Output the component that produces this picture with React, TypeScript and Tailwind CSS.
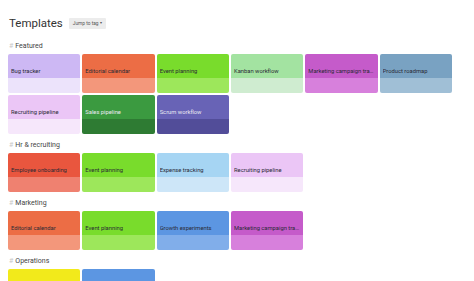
import React from "react";

type Card = { name: string; top: string; bottom: string; dark?: boolean };

const C = {
  bug: { name: "Bug tracker", top: "bg-[#cdb8f4]", bottom: "bg-[#ece3fb]" },
  editorial: { name: "Editorial calendar", top: "bg-[#ec6d45]", bottom: "bg-[#f3977b]" },
  event: { name: "Event planning", top: "bg-[#79dc2c]", bottom: "bg-[#9de75b]" },
  kanban: { name: "Kanban workflow", top: "bg-[#a3e3a1]", bottom: "bg-[#cfecd0]" },
  marketing: { name: "Marketing campaign tracker", top: "bg-[#c55bca]", bottom: "bg-[#d780dc]" },
  product: { name: "Product roadmap", top: "bg-[#79a2c2]", bottom: "bg-[#a0bfd6]" },
  recruiting: { name: "Recruiting pipeline", top: "bg-[#ebc6f6]", bottom: "bg-[#f6e7fb]" },
  sales: { name: "Sales pipeline", top: "bg-[#3b9a40]", bottom: "bg-[#2e7b33]", dark: true },
  scrum: { name: "Scrum workflow", top: "bg-[#6863b6]", bottom: "bg-[#524d99]", dark: true },
  employee: { name: "Employee onboarding", top: "bg-[#e9563e]", bottom: "bg-[#ef8170]" },
  expense: { name: "Expense tracking", top: "bg-[#a6d5f3]", bottom: "bg-[#cde6f8]" },
  growth: { name: "Growth experiments", top: "bg-[#5c96e2]", bottom: "bg-[#81aeea]" },
  opsYellow: { name: "", top: "bg-[#f2ea1b]", bottom: "bg-[#f6f07a]" },
  opsBlue: { name: "", top: "bg-[#5c96e2]", bottom: "bg-[#81aeea]" },
} satisfies Record<string, Card>;

const sections: { title: string; cards: Card[] }[] = [
  {
    title: "Featured",
    cards: [C.bug, C.editorial, C.event, C.kanban, C.marketing, C.product, C.recruiting, C.sales, C.scrum],
  },
  { title: "Hr & recruiting", cards: [C.employee, C.event, C.expense, C.recruiting] },
  { title: "Marketing", cards: [C.editorial, C.event, C.growth, C.marketing] },
  { title: "Operations", cards: [C.opsYellow, C.opsBlue] },
];

function TemplateCard({ card }: { card: Card }) {
  return (
    <div className="h-[39px] rounded-[2px] overflow-hidden flex flex-col">
      <div className={`${card.top} h-[24px] flex items-end px-[3px] pb-[2px]`}>
        <span
          className={`block w-full truncate text-[5.8px] leading-[9px] ${
            card.dark ? "text-[#e9e9f2]" : "text-[#2a2a35]"
          }`}
        >
          {card.name}
        </span>
      </div>
      <div className={`${card.bottom} flex-1`} />
    </div>
  );
}

export default function App() {
  return (
    <div
      className="w-[474px] h-[281px] overflow-hidden bg-white px-[8px] pt-[16px]"
      style={{ fontFamily: "Roboto, 'Noto Sans', sans-serif" }}
    >
      <div className="flex items-center gap-[6px] h-[15px] pl-[1px]">
        <span className="text-[11.5px] leading-[15px] text-[#333]">Templates</span>
        <span className="h-[11px] px-[4px] bg-[#ececec] rounded-[1px] text-[4.8px] leading-[11px] text-[#555] flex items-center gap-[1px]">
          Jump to tag <span className="text-[3.5px]">▾</span>
        </span>
      </div>
      <div className="mt-[9px] flex flex-col gap-[5px]">
        {sections.map((s) => (
          <div key={s.title}>
            <div className="h-[12px] flex items-center pl-[1px] text-[7px] leading-[12px]">
              <span className="text-[#c8c8c8] mr-[2px]">#</span>
              <span className="text-[#444]">{s.title}</span>
            </div>
            <div className="mt-[2px] w-[444px] grid grid-cols-6 gap-[2px]">
              {s.cards.map((c, i) => (
                <TemplateCard key={i} card={c} />
              ))}
            </div>
          </div>
        ))}
      </div>
    </div>
  );
}
